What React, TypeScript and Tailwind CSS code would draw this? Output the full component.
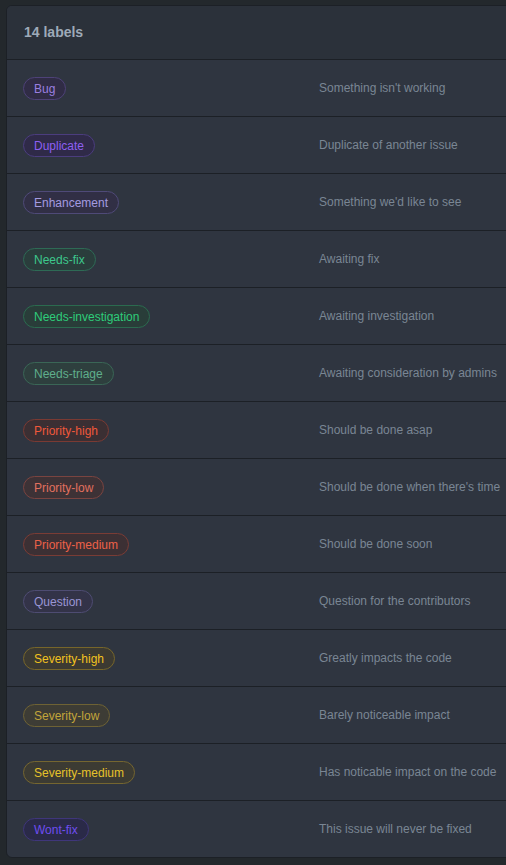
import React from "react";

interface Label {
  name: string;
  description: string;
  text: string;
  border: string;
  bg: string;
}

const labels: Label[] = [
  { name: "Bug", description: "Something isn't working", text: "text-[#9b7fe0]", border: "border-[#4e4278]", bg: "bg-[#302c45]" },
  { name: "Duplicate", description: "Duplicate of another issue", text: "text-[#8e5ff2]", border: "border-[#4b3d7e]", bg: "bg-[#2f2a48]" },
  { name: "Enhancement", description: "Something we'd like to see", text: "text-[#a49be0]", border: "border-[#4f4a78]", bg: "bg-[#312f45]" },
  { name: "Needs-fix", description: "Awaiting fix", text: "text-[#3dc88c]", border: "border-[#2e6a55]", bg: "bg-[#2a3d3c]" },
  { name: "Needs-investigation", description: "Awaiting investigation", text: "text-[#2ecc7a]", border: "border-[#2b6b4f]", bg: "bg-[#293d39]" },
  { name: "Needs-triage", description: "Awaiting consideration by admins", text: "text-[#5fae8c]", border: "border-[#3a6656]", bg: "bg-[#2e3f3e]" },
  { name: "Priority-high", description: "Should be done asap", text: "text-[#f0583a]", border: "border-[#7a3a33]", bg: "bg-[#3b2f33]" },
  { name: "Priority-low", description: "Should be done when there's time", text: "text-[#e2705e]", border: "border-[#7a4440]", bg: "bg-[#3d3236]" },
  { name: "Priority-medium", description: "Should be done soon", text: "text-[#ec6148]", border: "border-[#7a3c35]", bg: "bg-[#3c3034]" },
  { name: "Question", description: "Question for the contributors", text: "text-[#9a95d4]", border: "border-[#4e4c72]", bg: "bg-[#333348]" },
  { name: "Severity-high", description: "Greatly impacts the code", text: "text-[#f2c21f]", border: "border-[#77662a]", bg: "bg-[#3c3a32]" },
  { name: "Severity-low", description: "Barely noticeable impact", text: "text-[#c2a53a]", border: "border-[#6e6234]", bg: "bg-[#3d3c35]" },
  { name: "Severity-medium", description: "Has noticable impact on the code", text: "text-[#e6c22a]", border: "border-[#756630]", bg: "bg-[#3c3b33]" },
  { name: "Wont-fix", description: "This issue will never be fixed", text: "text-[#6e4df0]", border: "border-[#3f367a]", bg: "bg-[#2a2a48]" },
];

const LabelRow: React.FC<{ label: Label; last: boolean }> = ({ label, last }) => (
  <div
    className={`grid grid-cols-[296px_1fr] items-center h-[56px] px-4 ${
      last ? "" : "border-b border-[#1c2026]"
    } box-content`}
  >
    <div>
      <span
        className={`inline-flex items-center h-[23px] px-[10px] rounded-full border text-[12px] ${label.text} ${label.border} ${label.bg}`}
      >
        {label.name}
      </span>
    </div>
    <div className="text-[12px] text-[#7a8694] whitespace-nowrap">{label.description}</div>
  </div>
);

export default function App() {
  return (
    <div
      className="min-h-screen w-full overflow-hidden bg-[#23282c] pt-[5px] pl-[6px]"
      style={{ fontFamily: '"Liberation Sans", Arial, sans-serif' }}
    >
      <div className="w-[540px] rounded-md border border-[#1c2026] bg-[#2f3540] overflow-hidden">
        <div className="h-[53px] flex items-center px-[17px] bg-[#2b313a] border-b border-[#1c2026] box-content">
          <h5 className="text-[14px] font-bold text-[#9eaab8]">14 labels</h5>
        </div>
        {labels.map((l, i) => (
          <LabelRow key={l.name} label={l} last={i === labels.length - 1} />
        ))}
      </div>
    </div>
  );
}
